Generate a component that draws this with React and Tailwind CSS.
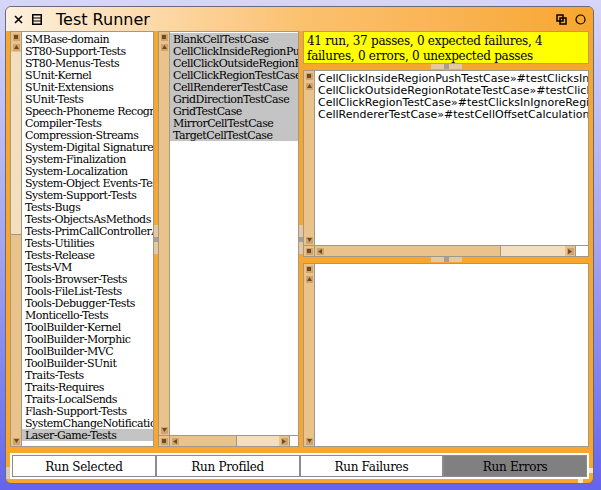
import React from 'react'

const packages = [
  'SMBase-domain', 'ST80-Support-Tests', 'ST80-Menus-Tests', 'SUnit-Kernel',
  'SUnit-Extensions', 'SUnit-Tests', 'Speech-Phoneme Recognition-Tests', 'Compiler-Tests',
  'Compression-Streams', 'System-Digital Signatures', 'System-Finalization', 'System-Localization',
  'System-Object Events-Tests', 'System-Support-Tests', 'Tests-Bugs', 'Tests-ObjectsAsMethods',
  'Tests-PrimCallControllerAbstract', 'Tests-Utilities', 'Tests-Release', 'Tests-VM',
  'Tools-Browser-Tests', 'Tools-FileList-Tests', 'Tools-Debugger-Tests', 'Monticello-Tests',
  'ToolBuilder-Kernel', 'ToolBuilder-Morphic', 'ToolBuilder-MVC', 'ToolBuilder-SUnit',
  'Traits-Tests', 'Traits-Requires', 'Traits-LocalSends', 'Flash-Support-Tests',
  'SystemChangeNotification-Tests', 'Laser-Game-Tests',
]

const classes = [
  'BlankCellTestCase', 'CellClickInsideRegionPushTestCase', 'CellClickOutsideRegionRotateTestCase',
  'CellClickRegionTestCase', 'CellRendererTestCase', 'GridDirectionTestCase', 'GridTestCase',
  'MirrorCellTestCase', 'TargetCellTestCase',
]

const failures = [
  'CellClickInsideRegionPushTestCase»#testClicksInPushRegion',
  'CellClickOutsideRegionRotateTestCase»#testClicksOutside',
  'CellClickRegionTestCase»#testClicksInIgnoreRegion',
  'CellRendererTestCase»#testCellOffsetCalculation',
]

const SERIF = "font-['DejaVu_Serif',serif] text-[11px] tracking-[-0.5px] text-black"
const SANS = "font-['DejaVu_Sans',sans-serif] text-[11px] text-black"

const Btn = ({ children }) => (
  <div className="w-[10px] h-[10px] shrink-0 flex items-center justify-center">
    <div className="w-[7px] h-[7px] bg-[#cfa36b] flex items-center justify-center">{children}</div>
  </div>
)

const Square = () => <div className="w-[4px] h-[4px] bg-[#6e4b26]" />

const Arrow = ({ dir }) => {
  const pts = {
    up: '2.5,0 5,4 0,4',
    down: '0,0 5,0 2.5,4',
    left: '0,2.5 4,0 4,5',
    right: '0,0 4,2.5 0,5',
  }[dir]
  const horiz = dir === 'left' || dir === 'right'
  return (
    <svg width={horiz ? 4 : 5} height={horiz ? 5 : 4}>
      <polygon points={pts} fill="#6b4a26" />
    </svg>
  )
}

const VScroll = ({ lightClass }) => (
  <div className="w-[11px] shrink-0 flex flex-col bg-[#e9c38a] border-r border-[#a0988b]">
    <Btn><Square /></Btn>
    <Btn><Arrow dir="up" /></Btn>
    {lightClass && <div className={`${lightClass} bg-[#f3dfbd] border-b border-[#a0988b]`} />}
    <div className="flex-1" />
    <Btn><Arrow dir="down" /></Btn>
  </div>
)

const HScroll = ({ thumbClass, trackClass }) => (
  <div className="h-[11px] shrink-0 flex border-t border-[#a0988b] bg-white">
    <div className="w-[11px] h-[10px] shrink-0 bg-[#e9c38a] border-r border-[#a0988b] flex items-center justify-center">
      <Btn><Square /></Btn>
    </div>
    <div className="flex bg-[#e9c38a] border-r border-[#a0988b]">
      <Btn><Arrow dir="left" /></Btn>
      <div className={`${thumbClass} bg-[#e9c38a] border-r border-[#a0988b]`} />
      <div className={`${trackClass} bg-[#f3dfbd]`} />
      <Btn><Arrow dir="right" /></Btn>
    </div>
  </div>
)

const ListBody = ({ items, font, isSelected }) => (
  <div className={`flex-1 min-w-0 overflow-hidden bg-white pt-[1px] ${font}`}>
    {items.map((item, i) => (
      <div
        key={item}
        className={`h-[12px] leading-[13px] pl-[3px] whitespace-nowrap overflow-hidden ${isSelected(i) ? 'bg-[#c4c4c4]' : ''}`}
      >
        {item}
      </div>
    ))}
  </div>
)

const VGrip = () => (
  <div className="w-[4px] shrink-0 flex flex-col justify-center">
    <div className="h-[12px] bg-[#e3c9a0]" />
    <div className="h-[5px] bg-[#a89f92]" />
    <div className="h-[12px] bg-[#e3c9a0]" />
  </div>
)

const HGrip = () => (
  <div className="h-[6px] shrink-0 flex justify-center items-start">
    <div className="w-[13px] h-[5px] bg-[#e3c9a0]" />
    <div className="w-[5px] h-[5px] bg-[#a89f92]" />
    <div className="w-[13px] h-[5px] bg-[#e3c9a0]" />
  </div>
)

const TitleIcons = () => (
  <div className="flex items-center gap-[8px] pr-[7px]">
    <svg width="11" height="11">
      <rect x="1" y="1" width="6" height="6" fill="none" stroke="black" strokeWidth="1.5" />
      <rect x="4" y="4" width="6" height="6" fill="none" stroke="black" strokeWidth="1.5" />
    </svg>
    <svg width="11" height="11">
      <circle cx="5.5" cy="5.5" r="4.5" fill="none" stroke="black" strokeWidth="1.2" />
    </svg>
  </div>
)

const buttons = ['Run Selected', 'Run Profiled', 'Run Failures', 'Run Errors']

export default function App() {
  return (
    <div className="w-[601px] h-[490px] overflow-hidden bg-linear-to-b from-[#d6d6f8] via-[#a4a4f0] to-[#6464ec] pt-[6px] pl-[5px]">
      <div className="relative w-[589px] h-[478px] rounded-[6px] border border-[#6a6a7e] bg-[#f8a62c] flex flex-col overflow-hidden">
        {/* Title bar */}
        <div className="h-[24px] shrink-0 flex items-center justify-between bg-linear-to-r from-[#fdf0de] via-[#fbc16f] to-[#f8a62c]">
          <div className="flex items-center pl-[8px] pt-[1px]">
            <svg width="9" height="9">
              <path d="M1 1 L8 8 M8 1 L1 8" stroke="black" strokeWidth="1.6" />
            </svg>
            <svg width="10" height="11" className="ml-[9px]">
              <rect x="0.75" y="0.75" width="8.5" height="9.5" fill="none" stroke="black" strokeWidth="1.5" />
              <path d="M1 4 H9 M1 7 H9" stroke="black" strokeWidth="1.2" />
            </svg>
            <span className="ml-[14px] font-['DejaVu_Sans',sans-serif] text-[16px] leading-[20px] text-black">
              Test Runner
            </span>
          </div>
          <TitleIcons />
        </div>

        {/* Panes */}
        <div className="h-[416px] shrink-0 flex px-[4px]">
          {/* Packages */}
          <div className="w-[144px] shrink-0 flex border border-[#a0988b] bg-white">
            <VScroll lightClass="h-[183px]" />
            <ListBody items={packages} font={SERIF} isSelected={(i) => i === packages.length - 1} />
          </div>
          <VGrip />

          {/* Classes */}
          <div className="w-[141px] shrink-0 flex flex-col border border-[#a0988b] bg-white">
            <div className="flex-1 flex min-h-0">
              <VScroll />
              <ListBody items={classes} font={SERIF} isSelected={() => true} />
            </div>
            <HScroll thumbClass="w-[57px]" trackClass="w-[42px]" />
          </div>
          <VGrip />

          {/* Results */}
          <div className="flex-1 min-w-0 flex flex-col">
            <div className="h-[33px] shrink-0 bg-[#ffff00] border border-[#b0a070] px-[3px] pt-[2px] leading-[15px] font-['DejaVu_Serif',serif] text-[12px] tracking-[-0.27px] text-black">
              41 run, 37 passes, 0 expected failures, 4 failures, 0 errors, 0 unexpected passes
            </div>
            <HGrip />
            <div className="h-[187px] shrink-0 flex flex-col border border-[#a0988b] bg-white">
              <div className="flex-1 flex min-h-0">
                <VScroll />
                <ListBody items={failures} font={SANS} isSelected={() => false} />
              </div>
              <HScroll thumbClass="w-[176px]" trackClass="w-[64px]" />
            </div>
            <HGrip />
            <div className="flex-1 flex border border-[#a0988b] bg-white">
              <VScroll />
              <div className="flex-1 bg-white" />
            </div>
          </div>
        </div>

        {/* Buttons */}
        <div className="mt-[6px] mx-[4px] h-[26px] shrink-0 border-2 border-white">
          <div className="h-full flex border border-[#8c8c8c] bg-[#8c8c8c] gap-[2px]">
            {buttons.map((b) => (
              <div
                key={b}
                className={`flex-1 flex items-center justify-center pt-[1px] font-['DejaVu_Serif',serif] text-[12px] tracking-[-0.3px] text-black ${b === 'Run Errors' ? 'bg-[#808080]' : 'bg-white'}`}
              >
                {b}
              </div>
            ))}
          </div>
        </div>

        {/* corner grips */}
        <div className="absolute right-0 bottom-[10px] w-[4px] h-[5px] bg-[#f2e6d6]" />
        <div className="absolute right-[10px] bottom-0 w-[5px] h-[4px] bg-[#f2e6d6]" />
        <div className="absolute left-0 bottom-[4px] w-[4px] h-[12px] bg-[#d9cbb8]" />
      </div>
    </div>
  )
}
